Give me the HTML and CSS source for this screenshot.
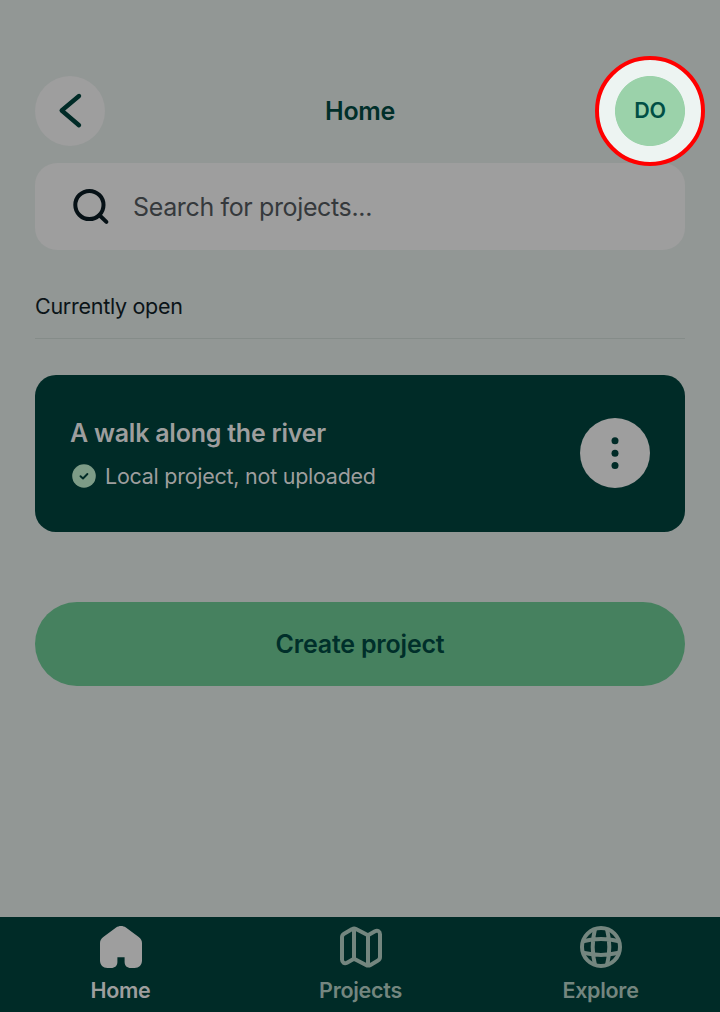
FILE: index.html
```html
<!DOCTYPE html>
<html lang="en">
<head>
<meta charset="utf-8">
<title>Home</title>
<link rel="stylesheet" href="styles.css">
</head>
<body>
<div class="screen">
  <header class="header">
    <button class="round" aria-label="Back">
      <svg width="70" height="70" viewBox="0 0 70 70" fill="none" stroke="#002b27" stroke-width="4.4" stroke-linecap="round" stroke-linejoin="round"><path d="M44 20 26.7 34.5 44 49.2"/></svg>
    </button>
    <h1 class="title">Home</h1>
    <div class="avatar">DO</div>
  </header>
  <div class="search">
    <svg class="search-icon" width="40" height="40" viewBox="0 0 40 40" fill="none" stroke="#061116" stroke-width="4" stroke-linecap="round"><circle cx="18.4" cy="18" r="14.1"/><path d="M28.5 28.3 35.4 34.9"/></svg>
    <span class="placeholder">Search for projects...</span>
  </div>
  <h2 class="section">Currently open</h2>
  <article class="card">
    <div class="info">
      <h3 class="name">A walk along the river</h3>
      <p class="status">
        <svg width="24" height="24" viewBox="0 0 24 24"><circle cx="12" cy="12" r="11.8" fill="#7d9c87"/><path d="M8.5 12.2 11 14.5 15.4 10" fill="none" stroke="#002b27" stroke-width="1.9" stroke-linecap="round" stroke-linejoin="round"/></svg>
        <span class="status-text">Local project, not uploaded</span>
      </p>
    </div>
    <button class="round" aria-label="More">
      <svg width="70" height="70" viewBox="0 0 70 70" fill="#002b27"><circle cx="35" cy="22.8" r="3.5"/><circle cx="35" cy="35.2" r="3.5"/><circle cx="35" cy="47.6" r="3.5"/></svg>
    </button>
  </article>
  <button class="create"><span class="create-text">Create project</span></button>
  <nav class="tabs">
    <a class="tab active">
      <svg width="42" height="42" viewBox="0 0 42 42" fill="currentColor"><path d="M16.1 1.5C19 -.5 23 -.5 25.9 1.5L38.7 10.9C40.8 12.5 42 14.3 42 17V34.5C42 39 39 42 34.5 42H31C27 42 24.6 39.8 24.6 36V31.3H17.4V36C17.4 39.8 15 42 11 42H7.5C3 42 0 39 0 34.5V17C0 14.3 1.2 12.5 3.3 10.9Z"/></svg>
      <span class="label-home">Home</span>
    </a>
    <a class="tab">
      <svg width="42" height="42" viewBox="0 0 42 42" fill="none" stroke="currentColor" stroke-width="4" stroke-linejoin="round"><path d="M12.2 3.1 4.1 7.7Q2 8.9 2 11.3V33.6C2 36.6 4.4 38.1 7 36.7L14 32.8 26 39Q28.2 40.2 30.5 38.9L38 34.6Q40 33.4 40 31V8.3C40 5.3 37.6 3.8 35 5.2L28 9.2 16 3Q14 2 12.2 3.1Z"/><path d="M14 3V33M28 9V39"/></svg>
      <span class="label-projects">Projects</span>
    </a>
    <a class="tab">
      <svg width="42" height="42" viewBox="0 0 42 42" fill="none" stroke="currentColor" stroke-width="4"><circle cx="21" cy="21" r="19"/><path d="M15 3Q10.4 21 15 39M27 3Q31.6 21 27 39M3 15.2Q21 11 39 15.2M3 26.8Q21 31 39 26.8"/></svg>
      <span class="label-explore">Explore</span>
    </a>
  </nav>
</div>
</body>
</html>
```
FILE: styles.css
```css
* {
  box-sizing: border-box;
}

body {
  margin: 0;
  font-family: Inter, "Liberation Sans", sans-serif;
}

h1, h2, h3, p {
  margin: 0;
}

button {
  border: 0;
  padding: 0;
  font-family: inherit;
}

svg {
  display: block;
  flex: none;
}

span, h1, h2, h3 {
  white-space: nowrap;
}

.screen {
  display: flex;
  flex-direction: column;
  width: 720px;
  height: 1012px;
  overflow: hidden;
  padding-top: 76px;
  background: #929795;
}

.header {
  display: flex;
  align-items: center;
  justify-content: space-between;
  height: 70px;
  margin: 0 35px;
}

.round {
  width: 70px;
  height: 70px;
  border-radius: 50%;
  background: #9e9e9e;
}

.title {
  padding-bottom: 1px;
  font-size: 25px;
  font-weight: 600;
  line-height: 30px;
  letter-spacing: -0.35px;
  color: #002f2a;
}

.avatar {
  position: relative;
  z-index: 0;
  display: flex;
  align-items: center;
  justify-content: center;
  width: 70px;
  height: 70px;
  padding-bottom: 2px;
  border-radius: 50%;
  font-size: 21.5px;
  font-weight: 600;
  letter-spacing: -0.3px;
  color: #004f45;
}

/* Spotlight ring around the avatar */
.avatar::before {
  content: "";
  position: absolute;
  z-index: -1;
  inset: -20px;
  border: 4px solid #f00;
  border-radius: 50%;
  background: radial-gradient(circle, #9bd2aa 34.6px, #edf4f2 35.4px);
}

.search {
  display: flex;
  align-items: center;
  height: 87px;
  margin: 17px 35px 0;
  padding-left: 36px;
  border-radius: 22px;
  background: #9e9e9e;
}

.placeholder {
  margin-left: 22px;
  font-size: 25px;
  letter-spacing: -0.36px;
  color: #35393c;
}

.section {
  height: 51px;
  margin: 38px 35px 0;
  padding-top: 4px;
  border-bottom: 1px solid #858c89;
  font-size: 21.5px;
  font-weight: 400;
  line-height: 28px;
  letter-spacing: -0.28px;
  color: #0b1418;
}

.card {
  display: flex;
  align-items: center;
  justify-content: space-between;
  height: 157px;
  margin: 36px 35px 0;
  padding: 0 35px 1px;
  border-radius: 21px;
  background: #002b27;
  color: #9e9e9e;
}

.name {
  font-size: 25px;
  font-weight: 600;
  line-height: 32px;
  letter-spacing: -0.23px;
}

.status {
  display: flex;
  align-items: center;
  gap: 9px;
  margin-top: 13px;
  padding-left: 2px;
  font-size: 21.5px;
  line-height: 28px;
  letter-spacing: -0.26px;
}

.create {
  height: 84px;
  margin: 70px 35px 0;
  border-radius: 42px;
  background: #46815f;
  font-size: 25px;
  font-weight: 600;
  letter-spacing: -0.2px;
  color: #002f2a;
}

.tabs {
  display: grid;
  grid-template-columns: repeat(3, 1fr);
  height: 95px;
  margin-top: auto;
  padding-top: 9px;
  background: #002b27;
}

.tab {
  display: flex;
  flex-direction: column;
  align-items: center;
  gap: 8px;
  padding-left: 1px;
  font-size: 21.5px;
  font-weight: 600;
  line-height: 28px;
  letter-spacing: -0.28px;
  color: #74867f;
}

.active {
  color: #9e9e9e;
}
```
